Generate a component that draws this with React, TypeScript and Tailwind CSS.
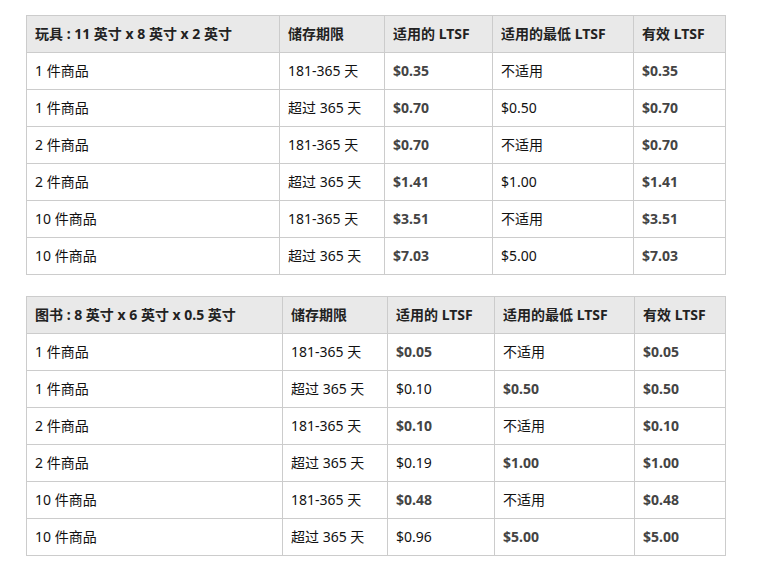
import React from 'react';

type Cell = { text: string; bold?: boolean };
type Row = [string, string, Cell, Cell, Cell];

const HEAD = ['储存期限', '适用的 LTSF', '适用的最低 LTSF', '有效 LTSF'];

const toys: Row[] = [
  ['1 件商品', '181-365 天', { text: '$0.35', bold: true }, { text: '不适用' }, { text: '$0.35', bold: true }],
  ['1 件商品', '超过 365 天', { text: '$0.70', bold: true }, { text: '$0.50' }, { text: '$0.70', bold: true }],
  ['2 件商品', '181-365 天', { text: '$0.70', bold: true }, { text: '不适用' }, { text: '$0.70', bold: true }],
  ['2 件商品', '超过 365 天', { text: '$1.41', bold: true }, { text: '$1.00' }, { text: '$1.41', bold: true }],
  ['10 件商品', '181-365 天', { text: '$3.51', bold: true }, { text: '不适用' }, { text: '$3.51', bold: true }],
  ['10 件商品', '超过 365 天', { text: '$7.03', bold: true }, { text: '$5.00' }, { text: '$7.03', bold: true }],
];

const books: Row[] = [
  ['1 件商品', '181-365 天', { text: '$0.05', bold: true }, { text: '不适用' }, { text: '$0.05', bold: true }],
  ['1 件商品', '超过 365 天', { text: '$0.10' }, { text: '$0.50', bold: true }, { text: '$0.50', bold: true }],
  ['2 件商品', '181-365 天', { text: '$0.10', bold: true }, { text: '不适用' }, { text: '$0.10', bold: true }],
  ['2 件商品', '超过 365 天', { text: '$0.19' }, { text: '$1.00', bold: true }, { text: '$1.00', bold: true }],
  ['10 件商品', '181-365 天', { text: '$0.48', bold: true }, { text: '不适用' }, { text: '$0.48', bold: true }],
  ['10 件商品', '超过 365 天', { text: '$0.96' }, { text: '$5.00', bold: true }, { text: '$5.00', bold: true }],
];

const td = 'h-[37px] border border-[#cccccc] px-2 py-0 text-left align-middle';

function LtsfTable({ title, rows, widths }: { title: string; rows: Row[]; widths: string[] }) {
  return (
    <table className="w-[699px] table-fixed border-collapse text-[14px] leading-5">
      <colgroup>
        {widths.map((w, i) => (
          <col key={i} className={w} />
        ))}
      </colgroup>
      <thead>
        <tr className="bg-[#e9e9e9]">
          <th className={`${td} font-bold text-[#222]`}>{title}</th>
          {HEAD.map((h) => (
            <th key={h} className={`${td} font-bold text-[#222]`}>{h}</th>
          ))}
        </tr>
      </thead>
      <tbody>
        {rows.map((r, i) => (
          <tr key={i} className="bg-white">
            <td className={`${td} text-[#111]`}>{r[0]}</td>
            <td className={`${td} text-[#111]`}>{r[1]}</td>
            {[r[2], r[3], r[4]].map((c, j) => (
              <td key={j} className={`${td} ${c.bold ? 'font-bold text-[#444]' : 'text-[#111]'}`}>
                {c.text}
              </td>
            ))}
          </tr>
        ))}
      </tbody>
    </table>
  );
}

export default function App() {
  return (
    <div
      className="min-h-[567px] w-[763px] bg-white pl-[26px] pt-[15px]"
      style={{ fontFamily: '"Noto Sans", "Noto Sans CJK SC", sans-serif' }}
    >
      <LtsfTable
        title="玩具 : 11 英寸 x 8 英寸 x 2 英寸"
        rows={toys}
        widths={['w-[253px]', 'w-[105px]', 'w-[108px]', 'w-[141px]', 'w-[92px]']}
      />
      <div className="h-[21px]" />
      <LtsfTable
        title="图书 : 8 英寸 x 6 英寸 x 0.5 英寸"
        rows={books}
        widths={['w-[256px]', 'w-[105px]', 'w-[107px]', 'w-[140px]', 'w-[91px]']}
      />
    </div>
  );
}
